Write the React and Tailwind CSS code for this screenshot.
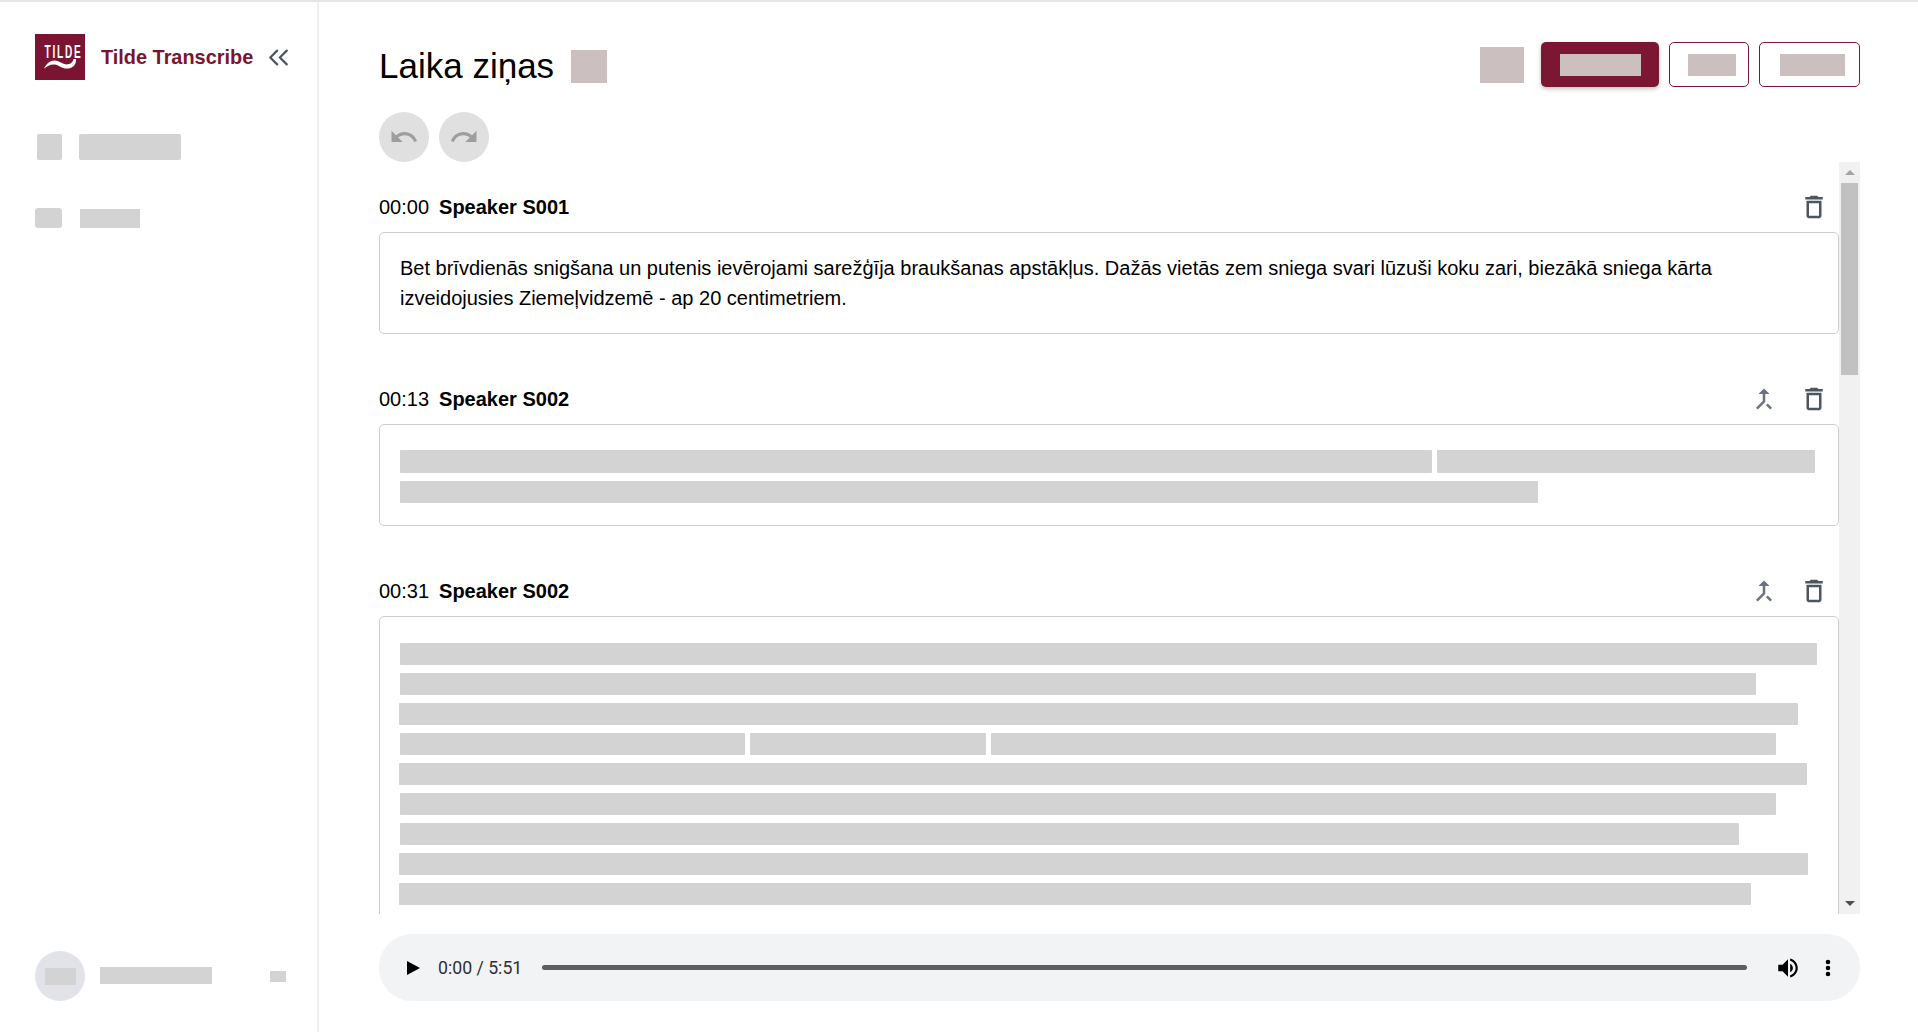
import React from 'react';
import { ChevronsLeft } from 'lucide-react';
import { MdCallMerge, MdDeleteOutline, MdRedo, MdUndo } from 'react-icons/md';

const Bar = ({ className, h = 'h-[22px]' }) => <div className={`rounded-[1px] bg-[#d3d3d3] ${h} ${className}`} />;

const Line = ({ children }) => <div className="flex h-[30px] items-center gap-[5px]">{children}</div>;

const Segment = ({ time, speaker, merge, children, boxClass }) => (
  <div className="mt-[30px] mb-[50px]">
    <div className="mb-[10px] flex h-[30px] items-center text-[20px] text-black">
      <span>{time}</span>
      <span className="ml-[10px] font-bold">{speaker}</span>
      <div className="ml-auto flex items-center gap-[20px] pr-[10px]">
        {merge && <MdCallMerge className="h-[30px] w-[30px] text-[#6b7280]" />}
        <MdDeleteOutline className="h-[30px] w-[30px] text-[#4b5563]" />
      </div>
    </div>
    <div className={`rounded-[5px] border border-[#cccccc] px-[20px] ${boxClass}`}>{children}</div>
  </div>
);

const App = () => {
  return (
    <div className="flex h-[1032px] overflow-hidden border-t-2 border-[#e5e5e5] bg-white font-['Liberation_Sans',sans-serif]">
      <aside className="flex w-[319px] shrink-0 flex-col justify-between border-r-2 border-[#f0f0f0] pb-[31px]">
        <div>
          <div className="mt-[32px] ml-[35px] flex items-center">
            <div className="flex h-[46px] w-[50px] shrink-0 items-center justify-center bg-[#7b1433]">
              <svg viewBox="0 0 50 46" className="h-[46px] w-[50px]">
                <g transform="translate(9.5 24) scale(0.56 1)">
                  <text x="0" y="0" fill="#fff" fontFamily="Liberation Sans, sans-serif" fontSize="18" fontWeight="700" letterSpacing="3.2">TILDE</text>
                </g>
                <path d="M9 34.5c2-4 6-8.5 11-8 5 .5 8 4.500 13 3.800 3-.4 5-2.500 5.500-5.300h2.500c.5 5-2.500 9-8 9.500-6 .5-9-3.500-13.500-4-4-.4-7 1.500-10.500 4z" fill="#fff" />
              </svg>
            </div>
            <span className="mt-[2px] ml-[16px] text-[19.9px] font-bold text-[#7b1433]">Tilde Transcribe</span>
            <ChevronsLeft className="ml-[9px] h-[33px] w-[33px] text-[#4b5563]" strokeWidth={1.6} />
          </div>
          <div className="mt-[54px] ml-[37px] flex gap-[17px]">
            <div className="h-[26px] w-[25px] rounded-[2px] bg-[#d3d3d3]" />
            <div className="h-[26px] w-[102px] rounded-[2px] bg-[#d3d3d3]" />
          </div>
          <div className="mt-[48px] ml-[35px] flex items-end gap-[18px]">
            <div className="h-[20px] w-[27px] rounded-[3px] bg-[#d3d3d3]" />
            <div className="h-[19px] w-[60px] bg-[#d3d3d3]" />
          </div>
        </div>
        <div className="ml-[35px] flex items-start">
          <div className="flex h-[50px] w-[50px] items-center justify-center rounded-full bg-[#e1e3e8]">
            <div className="h-[17px] w-[31px] bg-[#d3d3d3]" />
          </div>
          <div className="mt-[16px] ml-[15px] h-[17px] w-[112px] bg-[#d3d3d3]" />
          <div className="mt-[20px] ml-[58px] h-[11px] w-[16px] bg-[#d3d3d3]" />
        </div>
      </aside>

      <main className="flex min-w-0 flex-1 flex-col pt-[40px] pr-[58px] pl-[60px]">
        <div className="flex h-[45px] items-start">
          <h1 className="mt-[1px] text-[35px] leading-[45px] text-black">Laika ziņas</h1>
          <div className="mt-[8px] ml-[17px] h-[33px] w-[36px] bg-[#cbbfbf]" />
          <div className="mt-[5px] ml-auto h-[36px] w-[44px] bg-[#cbbfbf]" />
          <div className="ml-[17px] flex h-[45px] w-[118px] items-center justify-center rounded-[5px] bg-[#7b1633] shadow-[0_2px_4px_rgba(0,0,0,0.25)]">
            <div className="h-[22px] w-[81px] bg-[#cbbfbf]" />
          </div>
          <div className="ml-[10px] flex h-[45px] w-[80px] items-center rounded-[5px] border border-[#7b1633] pl-[18px]">
            <div className="h-[22px] w-[48px] bg-[#cbbfbf]" />
          </div>
          <div className="ml-[10px] flex h-[45px] w-[101px] items-center rounded-[5px] border border-[#7b1633] pl-[20px]">
            <div className="h-[22px] w-[65px] bg-[#cbbfbf]" />
          </div>
        </div>

        <div className="mt-[25px] flex gap-[10px]">
          <div className="flex h-[50px] w-[50px] items-center justify-center rounded-full bg-[#e0e0e0]">
            <MdUndo className="h-[30px] w-[30px] text-[#9e9e9e]" />
          </div>
          <div className="flex h-[50px] w-[50px] items-center justify-center rounded-full bg-[#e0e0e0]">
            <MdRedo className="h-[30px] w-[30px] text-[#9e9e9e]" />
          </div>
        </div>

        <div className="flex h-[752px] shrink-0">
          <div className="min-w-0 flex-1 overflow-hidden">
            <Segment time="00:00" speaker="Speaker S001" boxClass="py-[20px]">
              <p className="text-[20px] leading-[30px] text-black">
                Bet brīvdienās snigšana un putenis ievērojami sarežģīja braukšanas apstākļus. Dažās vietās zem sniega svari lūzuši koku zari, biezākā sniega kārta izveidojusies Ziemeļvidzemē - ap 20 centimetriem.
              </p>
            </Segment>
            <Segment time="00:13" speaker="Speaker S002" merge boxClass="pt-[25px] pb-[22px]">
              <div className="flex gap-[5px]">
                <Bar h="h-[23px]" className="w-[1032px]" />
                <Bar h="h-[23px]" className="w-[378px]" />
              </div>
              <Bar className="mt-[8px] w-[1138px]" />
            </Segment>
            <Segment time="00:31" speaker="Speaker S002" merge boxClass="pt-[22px] pb-[60px]">
              <Line><Bar className="w-[1417px]" /></Line>
              <Line><Bar className="w-[1356px]" /></Line>
              <Line><Bar className="-ml-px w-[1399px]" /></Line>
              <Line>
                <Bar className="w-[345px]" />
                <Bar className="w-[236px]" />
                <Bar className="w-[785px]" />
              </Line>
              <Line><Bar className="-ml-px w-[1408px]" /></Line>
              <Line><Bar className="w-[1376px]" /></Line>
              <Line><Bar className="w-[1339px]" /></Line>
              <Line><Bar className="-ml-px w-[1409px]" /></Line>
              <Line><Bar className="-ml-px w-[1352px]" /></Line>
            </Segment>
          </div>
          <div className="flex w-[21px] shrink-0 flex-col items-center bg-[#f1f1f1]">
            <div className="flex h-[21px] w-full items-center justify-center">
              <div className="h-0 w-0 border-x-[5px] border-b-[5px] border-x-transparent border-b-[#a3a3a3]" />
            </div>
            <div className="h-[192px] w-[17px] bg-[#c1c1c1]" />
            <div className="mt-auto flex h-[21px] w-full items-center justify-center">
              <div className="h-0 w-0 border-x-[5px] border-t-[5px] border-x-transparent border-t-[#505050]" />
            </div>
          </div>
        </div>

        <div className="mt-[20px] flex h-[67px] shrink-0 items-center rounded-[33px] bg-[#f1f3f4] pr-[29px] pl-[28px] text-[#1f1f1f]">
          <svg viewBox="0 0 13 14" className="h-[14px] w-[13px]"><path d="M0 0l13 7-13 7z" fill="#000" /></svg>
          <span className="mt-[2px] ml-[18px] font-['Roboto',sans-serif] text-[17.7px] leading-none text-[#303030]">0:00 / 5:51</span>
          <div className="ml-[20px] h-[5px] flex-1 rounded-full bg-[#5f5f5f]" />
          <svg viewBox="0 0 24 24" className="ml-[28px] h-[26px] w-[26px]">
            <path d="M3 9v6h4l5 5V4L7 9H3zm13.5 3c0-1.77-1.02-3.29-2.5-4.03v8.05c1.48-.73 2.5-2.25 2.5-4.02zM14 3.23v2.06c2.89.86 5 3.54 5 6.71s-2.11 5.85-5 6.71v2.06c4.01-.91 7-4.49 7-8.77s-2.99-7.86-7-8.77z" fill="#000" />
          </svg>
          <svg viewBox="0 0 6 18" className="ml-[24px] h-[18px] w-[6px]">
            <circle cx="3" cy="3" r="2.3" fill="#000" /><circle cx="3" cy="9" r="2.3" fill="#000" /><circle cx="3" cy="15" r="2.3" fill="#000" />
          </svg>
        </div>
      </main>
    </div>
  );
};

export default App;
